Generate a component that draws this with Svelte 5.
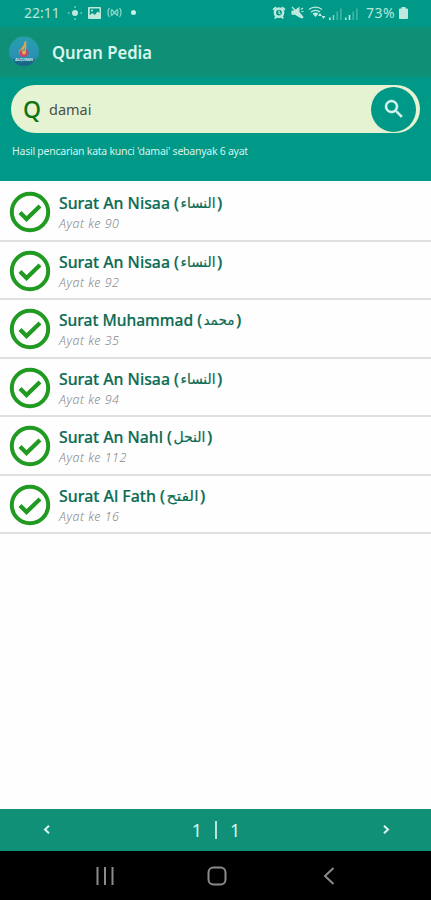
<script lang="ts">
  type Ayat = { surat: string; arab: string; ayat: number; start: number; width: number };

  let keyword = $state('damai');
  let page = $state(1);
  const pages = 1;

  // start: where the arabic name begins, width: how long it runs
  const results: Ayat[] = [
    { surat: 'An Nisaa', arab: 'النساء', ayat: 90, start: 121, width: 36 },
    { surat: 'An Nisaa', arab: 'النساء', ayat: 92, start: 121, width: 36 },
    { surat: 'Muhammad', arab: 'محمد', ayat: 35, start: 144, width: 32 },
    { surat: 'An Nisaa', arab: 'النساء', ayat: 94, start: 121, width: 36 },
    { surat: 'An Nahl', arab: 'النحل', ayat: 112, start: 114, width: 33 },
    { surat: 'Al Fath', arab: 'الفتح', ayat: 16, start: 107, width: 33 }
  ];
</script>

<div class="screen">
  <div class="status">
    <span class="time">22:11</span>
    <svg class="sun" width="16" height="14" viewBox="0 0 16 14">
      <circle cx="8" cy="7" r="3" />
      <path d="M7.400 0h1.300v2H7.400zM7.400 12h1.300v2H7.400zM1 6.300h1.500v1.500H1zM13.500 6.300H15v1.500h-1.500z" opacity=".7" />
    </svg>
    <svg class="picture" width="13" height="12" viewBox="0 0 13 12">
      <path fill-rule="evenodd" d="M1 0h11a1 1 0 0 1 1 1v10a1 1 0 0 1-1 1H1a1 1 0 0 1-1-1V1a1 1 0 0 1 1-1zm.7 1.600v6.600L4.400 6l2.300 2 3-3.500 1.800 1.600V1.600z" />
      <circle cx="4" cy="3.600" r="1" />
    </svg>
    <svg class="cast" width="15" height="11" viewBox="0 0 15 11">
      <path class="line" d="M2.500 1C.5 3 .5 8 2.500 10M5 2c-1.200 1.700-1.200 5.300 0 7M12.500 1c2 2 2 7 0 9M10 2c1.200 1.700 1.200 5.300 0 7M5 3l5 5M10 3L5 8" />
    </svg>
    <i class="dot"></i>

    <svg class="alarm" width="14" height="13" viewBox="0 0 14 13">
      <path fill-rule="evenodd" d="M7 1.200a5.400 5.400 0 1 1 0 10.800A5.400 5.400 0 0 1 7 1.200zm0 2.500a2.900 2.900 0 1 0 0 5.800 2.900 2.900 0 0 0 0-5.800z" />
      <path d="M.5 3L3.500.5l1.200 1.200-3 2.700zM13.500 3L10.500.5 9.300 1.700l3 2.700zM2 12l1.500-2 1.500 1.200L3.500 13zM12 12l-1.500-2L9 11.200l1.500 1.800z" />
      <path class="line" d="M7 4.500V7l1.500 1" />
    </svg>
    <svg class="mute" width="13" height="13" viewBox="0 0 13 13">
      <path d="M.5 4.500h2.500L8.500.8V6l4 5-1.500 1.500L8.500 11.500 4 8.800H.5z" />
      <path class="line" d="M1 1l11 11M10 3.500l2-1.500M10.500 5.500h2" />
    </svg>
    <svg class="wifi" width="18" height="13" viewBox="0 0 18 13">
      <path class="line" d="M1 3.500C4.500.3 10.500.3 14 3.500M3 6c2.500-2.300 6.500-2.300 9 0" />
      <path d="M4.500 7.500c2-1.500 4-1.500 6 0l-3 3.500zM12 7l2 3h-4zM15.500 13l-2-3h4z" />
    </svg>
    <svg class="signal" width="13" height="12" viewBox="0 0 13 12">
      <path d="M0 9.500h1.700V12H0z" /><path d="M3.700 7h1.500v5H3.700z" opacity=".7" />
      <path d="M7.500 3.500h1.400V12H7.500zM11.200.5h1.400V12h-1.400z" opacity=".4" />
    </svg>
    <svg class="signal" width="13" height="12" viewBox="0 0 13 12">
      <path d="M0 9.500h1.500V12H0zM3.700 7h1.600v5H3.700z" />
      <path d="M7.500 3.500h1.400V12H7.500zM11.200.5h1.400V12h-1.400z" opacity=".4" />
    </svg>
    <span class="percent">73%</span>
    <svg class="battery" width="9" height="12" viewBox="0 0 9 12">
      <path d="M2.500 0h4v1.500H8a1 1 0 0 1 1 1V11a1 1 0 0 1-1 1H1a1 1 0 0 1-1-1V2.500a1 1 0 0 1 1-1h1.500z" />
    </svg>
  </div>

  <header>
    <svg class="logo" width="32" height="32" viewBox="0 0 32 32">
      <defs>
        <linearGradient id="sky" x1="0" y1="0" x2="0" y2="1">
          <stop offset="0" stop-color="#279fad" />
          <stop offset=".65" stop-color="#2c91b5" />
          <stop offset="1" stop-color="#1a7590" />
        </linearGradient>
      </defs>
      <circle cx="16" cy="15.500" r="15" fill="url(#sky)" />
      <path d="M16.500 5.500c1.500 4 .5 7-2 9-2 1.500-3 2.500-2.500 4.500-3-3 0-5 1.500-7s3-4 3-6.500z" fill="#e8a14d" />
      <path d="M17.500 5v11" stroke="#d9a45c" stroke-width="1.500" />
      <path d="M14 13c-3 2-3.500 5-1.500 7 3 2 8 1 8-3 0-2-1-3.500-2.500-4 .5 3-1 5-3 4.500-2-.5-2-2.500-1-4.500z" fill="#c6476d" />
      <circle cx="16" cy="16.500" r="2" fill="#e9ad44" />
      <path d="M5 23h22c-2 5-6 7-11 7s-9-2-11-7z" fill="#125f7e" opacity=".7" />
      <text x="16" y="25" text-anchor="middle" textLength="18">ALQURAN</text>
    </svg>
    <svg class="name" width="110" height="26"><text x="0" y="19.500" textLength="100" lengthAdjust="spacingAndGlyphs">Quran Pedia</text></svg>
  </header>

  <section class="search">
    <div class="box">
      <span class="q">Q</span>
      <input bind:value={keyword} aria-label="Kata kunci" />
      <button class="go" aria-label="Cari">
        <svg width="24" height="24" viewBox="0 0 24 24">
          <path d="M15.500 14h-.79l-.28-.27A6.470 6.470 0 0 0 16 9.500 6.500 6.500 0 1 0 9.500 16c1.610 0 3.090-.59 4.230-1.570l.27.28v.79l5 4.990L20.490 19l-4.990-5zm-6 0C7.010 14 5 11.990 5 9.500S7.010 5 9.500 5 14 7.010 14 9.500 11.990 14 9.500 14z" />
        </svg>
      </button>
    </div>
    <p>Hasil pencarian kata kunci '{keyword}' sebanyak {results.length} ayat</p>
  </section>

  <ul>
    {#each results as r}
      <li>
        <svg class="check" width="42" height="42" viewBox="0 0 42 42">
          <circle cx="21" cy="21" r="18.200" />
          <path d="M11 21.500l6.500 6.500L31 15" />
        </svg>
        <div>
          <svg class="title" width="200" height="26">
            <text x="0" y="19" textLength={r.start - 1} lengthAdjust="spacingAndGlyphs">Surat {r.surat} (</text>
            <text class="arab" x={r.start + 0.5} y="18" textLength={r.width - 1} lengthAdjust="spacingAndGlyphs">{r.arab}</text>
            <text x={r.start + r.width + 1} y="19">)</text>
          </svg>
          <span class="ayat">Ayat ke {r.ayat}</span>
        </div>
      </li>
    {/each}
  </ul>

  <footer>
    <button aria-label="Sebelumnya" onclick={() => { if (page > 1) page -= 1 }}>
      <svg width="8" height="12" viewBox="0 0 8 12"><path d="M6 1.700L2 5.500l4 3.800" /></svg>
    </button>
    <div class="pages"><span>{page}</span><i></i><span>{pages}</span></div>
    <button aria-label="Berikutnya" onclick={() => { if (page < pages) page += 1 }}>
      <svg width="8" height="12" viewBox="0 0 8 12"><path d="M2 1.700l4 3.800-4 3.800" /></svg>
    </button>
  </footer>

  <nav>
    <svg width="18" height="18" viewBox="0 0 18 18"><path d="M1.500 0v18M9 0v18M16.500 0v18" /></svg>
    <svg class="home" width="20" height="20" viewBox="0 0 20 20"><rect x="1.500" y="1.500" width="17" height="17" rx="5" /></svg>
    <svg width="12" height="18" viewBox="0 0 12 18"><path d="M10.500 1L2 9l8.500 8" /></svg>
  </nav>
</div>

<style>
:global(body){
  margin: 0;
}
.screen{
  display: flex;
  flex-direction: column;
  width: 431px;
  height: 900px;
  background: #fefefe;
  font-family: "Noto Sans", "DejaVu Sans", sans-serif;
  overflow: hidden;
}
svg{
  display: block;
  flex: none;
}
button{
  border: 0;
  padding: 0;
  background: none;
  display: flex;
  align-items: center;
  justify-content: center;
}
.status{
  height: 27px;
  flex: none;
  box-sizing: border-box;
  padding: 0 0 2px 24px;
  display: flex;
  align-items: center;
  background: #009987;
  color: #b9e6dc;
  font-size: 14px;
}
.status svg{
  fill: #bfe9df;
}
.status .line{
  fill: none;
  stroke: #bfe9df;
  stroke-width: 1.2;
}
.time{
  width: 43px;
}
.picture{
  margin-left: 5px;
}
.cast{
  margin-left: 6px;
  opacity: .75;
}
.dot{
  width: 5px;
  height: 5px;
  margin-left: 9px;
  border-radius: 50%;
  background: #c8eee4;
}
.alarm{
  margin-left: 136px;
}
.mute{
  margin-left: 5px;
}
.wifi{
  margin-left: 4px;
}
.signal{
  margin: 3px 0 0 3px;
}
.percent{
  width: 33px;
  margin-left: 8px;
  letter-spacing: 0.5px;
}
header{
  height: 50px;
  flex: none;
  display: flex;
  align-items: center;
  padding-left: 8px;
  background: #0f8f75;
}
.logo text{
  font-size: 4px;
  font-weight: 700;
  fill: #c9e8ee;
}
.name{
  margin-left: 12px;
}
.name text{
  font-size: 18.5px;
  font-weight: 600;
  fill: #d7f6ee;
}
.search{
  height: 104px;
  flex: none;
  padding: 8px 11px 0;
  box-sizing: border-box;
  background: #009987;
}
.box{
  display: flex;
  align-items: center;
  height: 48px;
  box-sizing: border-box;
  padding: 0 4px 0 12px;
  border-radius: 24px;
  background: #e6f3d3;
}
.q{
  width: 26px;
  color: #127312;
  font-size: 23px;
  font-weight: 500;
  line-height: 46px;
}
input{
  flex: 1;
  min-width: 0;
  padding: 0;
  border: 0;
  outline: 0;
  background: none;
  color: #46514a;
  font: 14.5px "Noto Sans", sans-serif;
}
.go{
  width: 45px;
  height: 45px;
  border-radius: 50%;
  background: #009987;
}
.go svg{
  fill: #d9f6f0;
  stroke: #d9f6f0;
  stroke-width: .5;
}
p{
  margin: 9px 0 0 1px;
  color: #d5f3ed;
  font-size: 10.5px;
  line-height: 18px;
  letter-spacing: -0.25px;
  white-space: nowrap;
}
ul{
  flex: 1;
  margin: 0;
  padding: 2px 0 0;
  list-style: none;
}
li{
  display: flex;
  height: 58.5px;
  box-sizing: border-box;
  padding: 8px 0 0 9px;
  border-bottom: 2px solid #dfdfdf;
}
.check{
  fill: none;
  stroke: #219a21;
  stroke-width: 4;
}
.check path{
  stroke-width: 4.2;
}
li div{
  margin-left: 8px;
}
.title{
  margin-top: -1px;
}
.title text{
  font-size: 17px;
  font-weight: 500;
  fill: #0b6b53;
  stroke: #0b6b53;
  stroke-width: .2px;
}
.title .arab{
  font-size: 14px;
  font-weight: 400;
}
.ayat{
  display: block;
  margin-top: -1px;
  color: #8a8a8a;
  font-size: 12.5px;
  font-style: italic;
  font-weight: 300;
  line-height: 18px;
  letter-spacing: 0.5px;
}
footer{
  height: 42px;
  flex: none;
  display: flex;
  align-items: center;
  justify-content: space-between;
  padding: 0 41px 0 43px;
  background: #0f9077;
  color: #d5f5ec;
}
footer button svg{
  fill: none;
  stroke: #dcf8f0;
  stroke-width: 2;
}
.pages{
  display: flex;
  align-items: center;
  gap: 13px;
  margin-right: 1px;
  font-size: 18px;
}
.pages i{
  width: 2px;
  height: 18px;
  background: #b5e6d9;
}
nav{
  height: 49px;
  flex: none;
  box-sizing: border-box;
  display: flex;
  align-items: center;
  justify-content: space-between;
  padding: 0 96px;
  background: #000;
}
nav svg{
  fill: none;
  stroke: #8b8b8b;
  stroke-width: 2;
}
.home{
  margin-right: 4px;
}
</style>
